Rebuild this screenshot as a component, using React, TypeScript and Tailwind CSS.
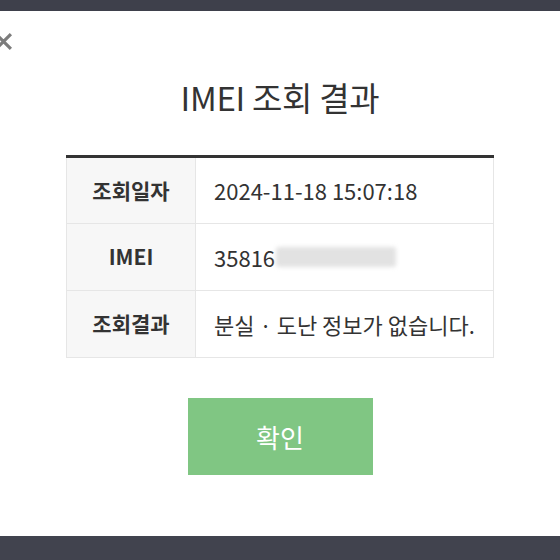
import React from "react";

const rows = [
  { label: "조회일자", value: "2024-11-18 15:07:18" },
  { label: "IMEI", value: "imei" },
  { label: "조회결과", value: "분실 · 도난 정보가 없습니다." },
];

export default function App() {
  return (
    <div className="flex h-[560px] w-[560px] flex-col overflow-hidden bg-white font-['Noto_Sans_CJK_KR','Noto_Sans',sans-serif]">
      <div className="h-[11px] shrink-0 bg-[#3e404b]" />
      <div className="relative flex flex-1 flex-col items-center">
        {/* close button, clipped at the left edge */}
        <svg
          className="absolute left-[-6px] top-[21px]"
          width="19"
          height="19"
          viewBox="0 0 18 18"
          fill="none"
          stroke="#7c7c7c"
          strokeWidth="3"
        >
          <path d="M2 2 L16 16 M16 2 L2 16" />
        </svg>

        <h1 className="mt-[64px] text-[33px] leading-[44px] font-normal tracking-[-0.3px] text-[#333]">
          IMEI 조회 결과
        </h1>

        <table className="mt-[36px] w-[428px] border-collapse border-t-[3px] border-t-[#333]">
          <tbody>
            {rows.map((r) => (
              <tr key={r.label} className="h-[67px] border-b border-[#e6e6e6]">
                <th className="w-[129px] border-l border-r border-[#e6e6e6] bg-[#f7f7f7] text-[21px] font-bold text-[#333]">
                  {r.label}
                </th>
                <td className="border-r border-[#e6e6e6] pl-[18px] text-left text-[22px] text-[#333]">
                  {r.value === "imei" ? (
                    <span className="flex items-center">
                      35816
                      <span className="ml-[1px] inline-block h-[20px] w-[120px] rounded-[3px] bg-[#e2e2e2] blur-[2px]" />
                    </span>
                  ) : (
                    r.value
                  )}
                </td>
              </tr>
            ))}
          </tbody>
        </table>

        <button className="mt-[40px] flex h-[77px] w-[185px] items-center justify-center bg-[#80c683] text-[26px] text-white">
          확인
        </button>
      </div>
      <div className="h-[24px] shrink-0 bg-[#41434e]" />
    </div>
  );
}
